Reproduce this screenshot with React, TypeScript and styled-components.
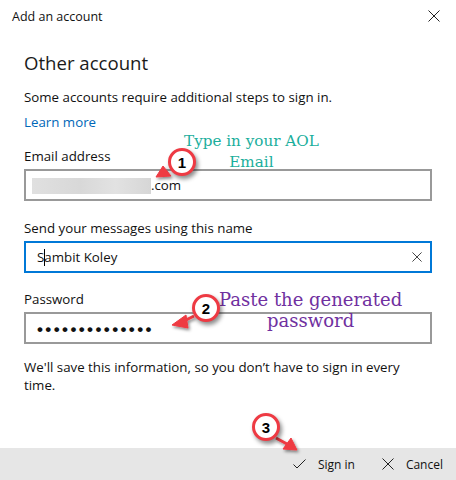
import React from "react";
import styled, { createGlobalStyle } from "styled-components";

const GlobalStyle = createGlobalStyle`
  html, body { margin: 0; padding: 0; background: #fff; }
  body { font-family: "Open Sans", "Noto Sans", Arial, sans-serif; color: #000; }
  * { box-sizing: border-box; }
`;

const Window = styled.div`
  position: relative;
  width: 456px;
  height: 480px;
  display: flex;
  flex-direction: column;
  background: #fff;
  overflow: hidden;
`;

const TitleBar = styled.div`
  height: 32px;
  display: flex;
  align-items: center;
  justify-content: space-between;
  padding: 0 16px 0 12px;
  font-size: 12.5px;
  color: #111;
`;

const Content = styled.div`
  flex: 1;
  display: flex;
  flex-direction: column;
  padding: 16px 24px 0 24px;
`;

const Heading = styled.h1`
  margin: 0;
  font-size: 18.6px;
  font-weight: 400;
  line-height: 30px;
  color: #1a1a1a;
`;

const Para = styled.p<{ $top: number }>`
  margin: ${(p) => p.$top}px 0 0 0;
  font-size: 13.3px;
  line-height: 18px;
  color: #111;
`;

const Link = styled.a`
  margin-top: 7px;
  font-size: 13.3px;
  line-height: 18px;
  color: #0067b8;
  text-decoration: none;
`;

const Field = styled.div<{ $gap: number }>`
  display: flex;
  flex-direction: column;
  margin-top: ${(p) => p.$gap}px;
`;

const Label = styled.label`
  font-size: 13.3px;
  line-height: 19px;
  color: #111;
  margin-bottom: 3px;
`;

const InputBox = styled.div<{ $focused?: boolean }>`
  height: 32px;
  width: 408px;
  border: 2px solid ${(p) => (p.$focused ? "#0078d7" : "#999999")};
  display: flex;
  align-items: center;
  padding: 0 8px 0 6px;
  font-size: 13.3px;
  color: #111;
`;

const Blur = styled.span`
  display: inline-block;
  width: 119px;
  height: 16px;
  background: linear-gradient(90deg, #e0e0e0, #d8d8d8 40%, #e2e2e2 70%, #d6d6d6);
  margin-top: 2px;
`;

const Value = styled.span`
  flex: 1;
  display: flex;
  align-items: center;
  padding-left: 5px;
`;

const Caret = styled.span`
  display: inline-block;
  width: 1px;
  height: 17px;
  background: #000;
  margin: 0 -1px 0 0;
`;

const Dots = styled.span`
  padding-left: 5px;
  font-family: "Liberation Sans", Arial, sans-serif;
  font-weight: 700;
  font-size: 17px;
  letter-spacing: 2.4px;
  line-height: 1;
  margin-top: 2px;
`;

const Footer = styled.div`
  height: 32px;
  background: #e6e6e6;
  display: flex;
  justify-content: flex-end;
  align-items: center;
  padding-right: 13px;
  gap: 27px;
`;

const FooterButton = styled.button`
  border: 0;
  background: transparent;
  display: flex;
  align-items: center;
  gap: 12px;
  font-family: inherit;
  font-size: 12px;
  color: #111;
  padding: 0;
`;

const Note = styled.div<{ $color: string; $x: number; $y: number; $size: number }>`
  position: absolute;
  left: ${(p) => p.$x}px;
  top: ${(p) => p.$y}px;
  color: ${(p) => p.$color};
  font-family: "DejaVu Serif", "Liberation Serif", serif;
  font-size: ${(p) => p.$size}px;
  line-height: 21px;
  text-align: center;
  white-space: nowrap;
`;

const Overlay = styled.svg`
  position: absolute;
  left: 0;
  top: 0;
  pointer-events: none;
`;

const Badge = styled.div<{ $x: number; $y: number }>`
  position: absolute;
  left: ${(p) => p.$x - 14}px;
  top: ${(p) => p.$y - 14}px;
  width: 28px;
  height: 28px;
  border-radius: 50%;
  border: 3px solid #ee3a43;
  background: #fff;
  box-shadow: 2px 3px 4px rgba(0, 0, 0, 0.45);
  display: flex;
  align-items: center;
  justify-content: center;
  font-family: "Liberation Sans", Arial, sans-serif;
  font-weight: 700;
  font-size: 15px;
  color: #000;
`;

const XIcon = ({ size = 12 }: { size?: number }) => (
  <svg width={size} height={size} viewBox="0 0 12 12">
    <path d="M0.5 0.5 L11.5 11.5 M11.5 0.5 L0.5 11.5" stroke="#222" strokeWidth="1" fill="none" />
  </svg>
);

const CheckIcon = () => (
  <svg width="13" height="10" viewBox="0 0 13 10">
    <path d="M0.5 5.5 L4 9 L12.5 0.5" stroke="#222" strokeWidth="1" fill="none" />
  </svg>
);

export default function App() {
  return (
    <>
      <GlobalStyle />
      <Window>
        <TitleBar>
          <span>Add an account</span>
          <XIcon size={12} />
        </TitleBar>
        <Content>
          <Heading>Other account</Heading>
          <Para $top={10}>Some accounts require additional steps to sign in.</Para>
          <Link href="#">Learn more</Link>
          <Field $gap={16}>
            <Label>Email address</Label>
            <InputBox>
              <Blur />
              <span>.com</span>
            </InputBox>
          </Field>
          <Field $gap={18}>
            <Label>Send your messages using this name</Label>
            <InputBox $focused>
              <Value>
                S<Caret />ambit Koley
              </Value>
              <XIcon size={10} />
            </InputBox>
          </Field>
          <Field $gap={17}>
            <Label>Password</Label>
            <InputBox>
              <Dots>••••••••••••••</Dots>
            </InputBox>
          </Field>
          <Para $top={14}>We'll save this information, so you don’t have to sign in every time.</Para>
        </Content>
        <Footer>
          <FooterButton>
            <CheckIcon />
            Sign in
          </FooterButton>
          <FooterButton>
            <XIcon size={12} />
            Cancel
          </FooterButton>
        </Footer>

        <Note $color="#1aae9c" $x={184} $y={131} $size={15.2}>
          Type in your AOL
          <br />
          Email
        </Note>
        <Note $color="#7030a0" $x={219} $y={289} $size={18}>
          Paste the generated
          <br />
          password
        </Note>

        <Overlay width="456" height="480" viewBox="0 0 456 480">
          <defs>
            <filter id="sh" x="-50%" y="-50%" width="200%" height="200%">
              <feDropShadow dx="1.5" dy="2" stdDeviation="1.5" floodColor="#000" floodOpacity="0.45" />
            </filter>
          </defs>
          <g fill="#ee3a43" stroke="#ee3a43" filter="url(#sh)">
            <path d="M163 166 L171 176 L156 177 Z" strokeWidth="1" />
            <path d="M194 316 L184 321" strokeWidth="3" />
            <path d="M172 325 L186 315 L188 328 Z" strokeWidth="1" />
            <path d="M276 438 L287 444" strokeWidth="3" />
            <path d="M297 450 L283 449 L291 438 Z" strokeWidth="1" />
          </g>
        </Overlay>
        <Badge $x={182} $y={162}>1</Badge>
        <Badge $x={206} $y={308}>2</Badge>
        <Badge $x={266} $y={427}>3</Badge>
      </Window>
    </>
  );
}
